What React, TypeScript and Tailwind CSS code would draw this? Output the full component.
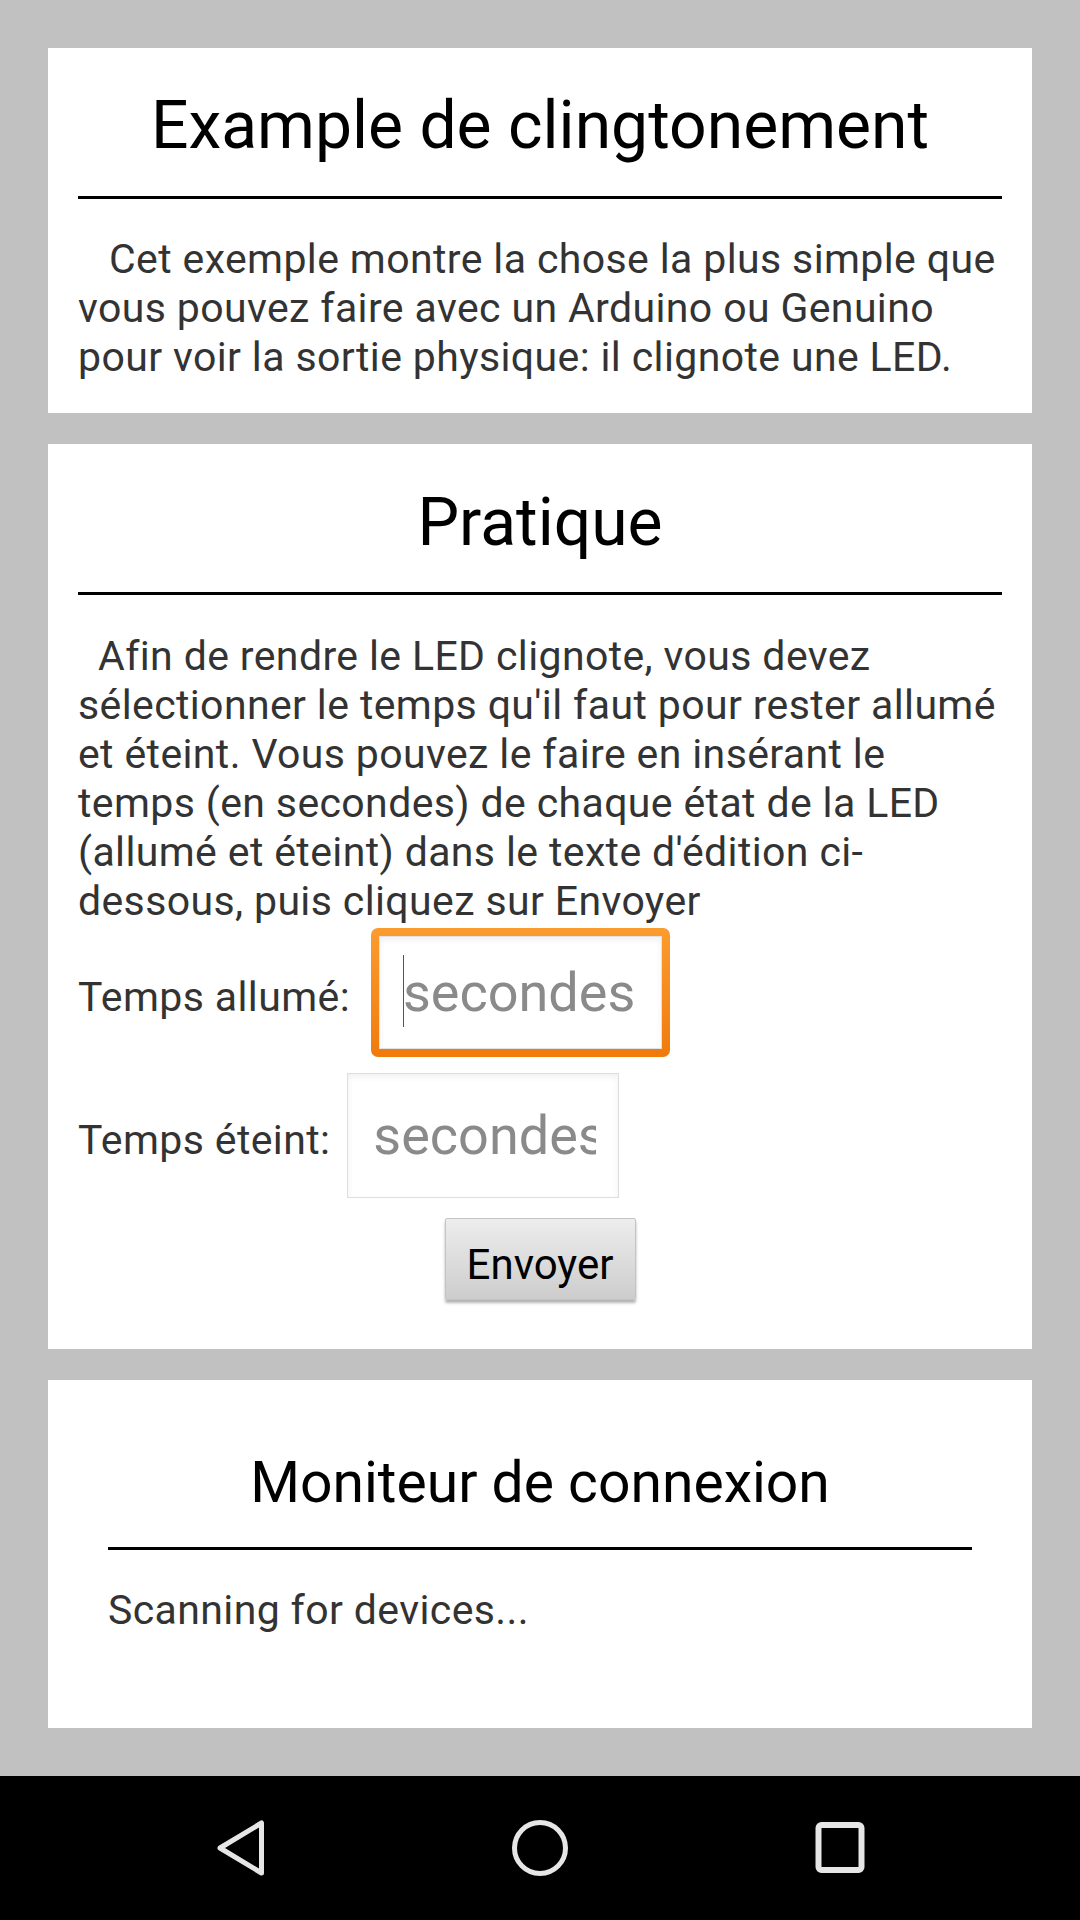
const para1 = [
  'Cet exemple montre la chose la plus simple que',
  'vous pouvez faire avec un Arduino ou Genuino',
  'pour voir la sortie physique: il clignote une LED.',
];

const para2 = [
  'Afin de rendre le LED clignote, vous devez',
  "sélectionner le temps qu'il faut pour rester allumé",
  'et éteint. Vous pouvez le faire en insérant le',
  'temps (en secondes) de chaque état de la LED',
  "(allumé et éteint) dans le texte d'édition ci-",
  'dessous, puis cliquez sur Envoyer',
];

function Lines({ lines }: { lines: string[] }) {
  return (
    <>
      {lines.map((l, i) => (
        <span key={i}>
          {l}
          {i < lines.length - 1 && <br />}
        </span>
      ))}
    </>
  );
}

function NavBar() {
  return (
    <div className="h-[144px] bg-black flex justify-center items-center">
      <div className="w-[300px] flex justify-center">
        <svg width="60" height="60" viewBox="0 0 60 60" fill="none">
          <path d="M10 30 L51.5 5 L51.5 55 Z" stroke="#e6e6e6" strokeWidth="5" strokeLinejoin="round" />
        </svg>
      </div>
      <div className="w-[300px] flex justify-center">
        <svg width="60" height="60" viewBox="0 0 60 60" fill="none">
          <circle cx="30" cy="30" r="25.5" stroke="#e6e6e6" strokeWidth="5" />
        </svg>
      </div>
      <div className="w-[300px] flex justify-center">
        <svg width="60" height="60" viewBox="0 0 60 60" fill="none">
          <rect x="8.5" y="7" width="43" height="45" rx="3" stroke="#e6e6e6" strokeWidth="6" />
        </svg>
      </div>
    </div>
  );
}

export default function App() {
  return (
    <div className="h-[1920px] flex flex-col bg-[#c1c1c1] font-['Roboto',sans-serif]">
      <main className="flex-1 flex flex-col gap-[31px] pt-[48px] px-[48px]">
        {/* card 1 */}
        <section className="bg-white pt-[39px] px-[30px] pb-[31px]">
          <h1 className="text-center text-[66px] leading-[77px] text-black">Example de clingtonement</h1>
          <div className="mt-[32px] h-[3px] bg-black" />
          <p className="mt-[36px] text-[41px] leading-[49px] tracking-[0.38px] text-[#333] whitespace-nowrap indent-[31px]">
            <Lines lines={para1} />
          </p>
        </section>

        {/* card 2 */}
        <section className="bg-white pt-[40px] px-[30px] pb-[49px]">
          <h1 className="text-center text-[66px] leading-[77px] text-black">Pratique</h1>
          <div className="mt-[31px] h-[3px] bg-black" />
          <p className="mt-[37px] text-[41px] leading-[49px] tracking-[0.38px] text-[#333] whitespace-nowrap indent-[20px]">
            <Lines lines={para2} />
          </p>

          <div className="mt-[2px] flex items-baseline">
            <span className="text-[41px] leading-[49px] tracking-[0.38px] text-[#333]">Temps allumé:</span>
            <div className="ml-[21px] relative rounded-[7px] p-[8px] bg-gradient-to-b from-[#fb9c2e] to-[#f07a0a]">
              <input
                className="block w-[283px] h-[113px] bg-white border border-[#e2e2e2] shadow-[inset_0_3px_6px_rgba(0,0,0,0.06)] pl-[23px] pr-[20px] text-[54px] text-[#333] placeholder:text-[#8a8a8a] outline-none font-['Roboto',sans-serif]"
                placeholder="secondes"
              />
              <span className="absolute left-[32px] top-[27px] w-[1px] h-[72px] bg-[#555]" />
            </div>
          </div>

          <div className="mt-[16px] flex items-baseline">
            <span className="text-[41px] leading-[49px] tracking-[0.38px] text-[#333]">Temps éteint:</span>
            <input
              className="ml-[17px] block w-[272px] h-[125px] bg-white border border-[#dedede] shadow-[inset_0_3px_6px_rgba(0,0,0,0.06)] pl-[25px] pr-[22px] text-[54px] text-[#333] placeholder:text-[#8a8a8a] outline-none font-['Roboto',sans-serif]"
              placeholder="secondes"
            />
          </div>

          <div className="mt-[20px] flex justify-center">
            <button className="w-[191px] h-[82px] pt-[10px] rounded-[2px] border border-[#c4c4c4] bg-gradient-to-b from-[#ededed] to-[#cdcdcd] shadow-[0_3px_3px_rgba(0,0,0,0.3)] text-[42px] text-black font-['Roboto',sans-serif]">
              Envoyer
            </button>
          </div>
        </section>

        {/* card 3 */}
        <section className="bg-white pt-[70px] px-[60px] pb-[93px]">
          <h2 className="text-center text-[57px] leading-[66px] text-black">Moniteur de connexion</h2>
          <div className="mt-[31px] h-[3px] bg-black" />
          <p className="mt-[36px] text-[41px] leading-[49px] tracking-[0.38px] text-[#333]">Scanning for devices...</p>
        </section>
      </main>
      <NavBar />
    </div>
  );
}
